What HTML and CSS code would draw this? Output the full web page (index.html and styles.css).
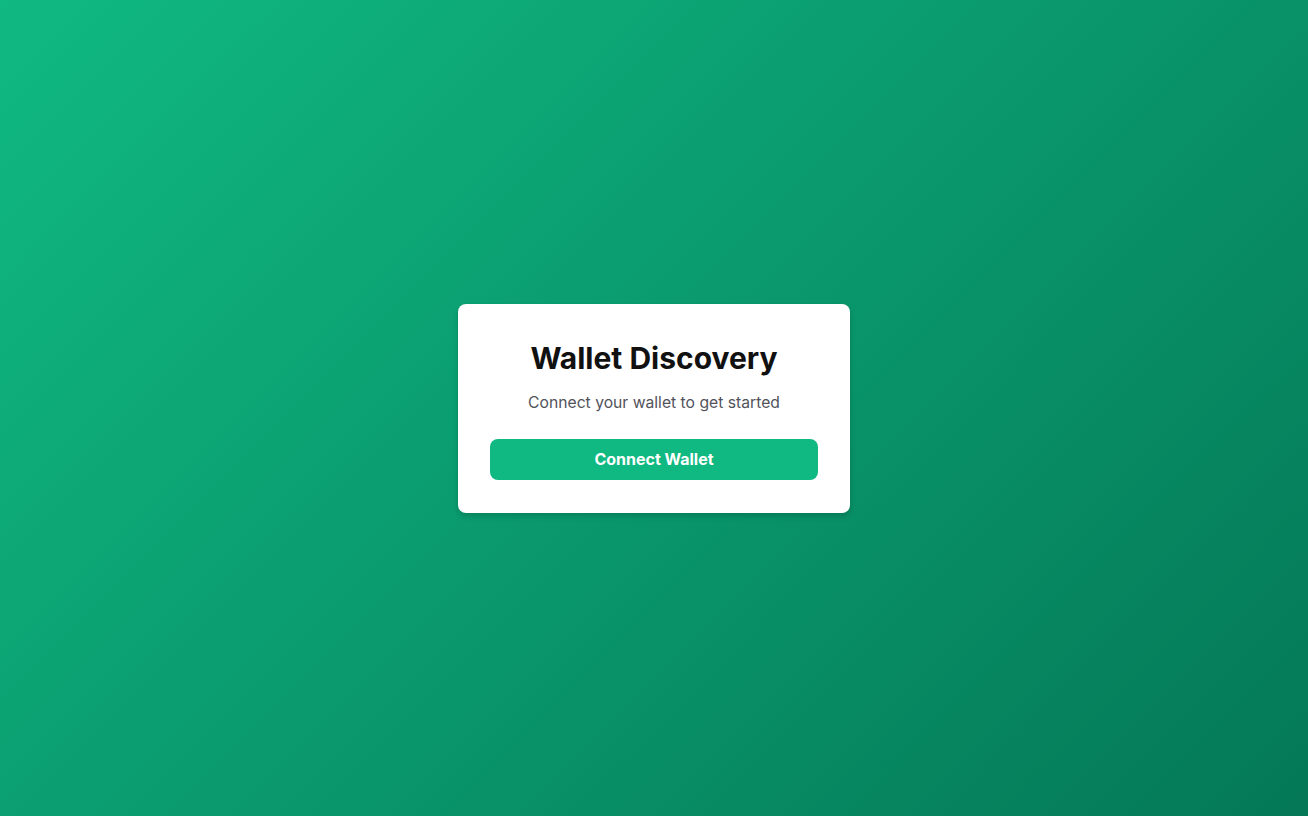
FILE: index.html
```html
<!DOCTYPE html>
<html lang="en">
<head>
<meta charset="utf-8">
<title>Wallet Discovery</title>
<link rel="stylesheet" href="styles.css">
</head>
<body>
<main class="page">
  <section class="card">
    <h1 class="title">Wallet Discovery</h1>
    <p class="subtitle">Connect your wallet to get started</p>
    <button class="connect-btn" type="button">Connect Wallet</button>
  </section>
</main>
</body>
</html>
```

FILE: styles.css
```css
* { box-sizing: border-box; }
html, body { margin: 0; padding: 0; height: 100%; }
body {
  font-family: Inter, "Noto Sans", "Liberation Sans", sans-serif;
  background: linear-gradient(135deg, #10b981 0%, #047857 100%);
  min-height: 100vh;
}
.page {
  min-height: 100vh;
  display: flex;
  align-items: center;
  justify-content: center;
}
.card {
  width: 392px;
  background: #ffffff;
  border-radius: 8px;
  padding: 32px 32px 33px;
  text-align: center;
  box-shadow: 0 4px 6px rgba(0, 0, 0, 0.1), 0 2px 4px rgba(0, 0, 0, 0.06);
}
.title {
  margin: 0 0 10px;
  font-size: 30px;
  line-height: 45px;
  font-weight: 700;
  color: #111111;
}
.subtitle {
  margin: 0 0 24px;
  font-size: 15.7px;
  line-height: 24px;
  color: #52525b;
}
.connect-btn {
  display: block;
  width: 100%;
  height: 41px;
  border: none;
  border-radius: 8px;
  background: #10b981;
  color: #ffffff;
  font-family: inherit;
  font-size: 16px;
  font-weight: 700;
  cursor: pointer;
}
```
